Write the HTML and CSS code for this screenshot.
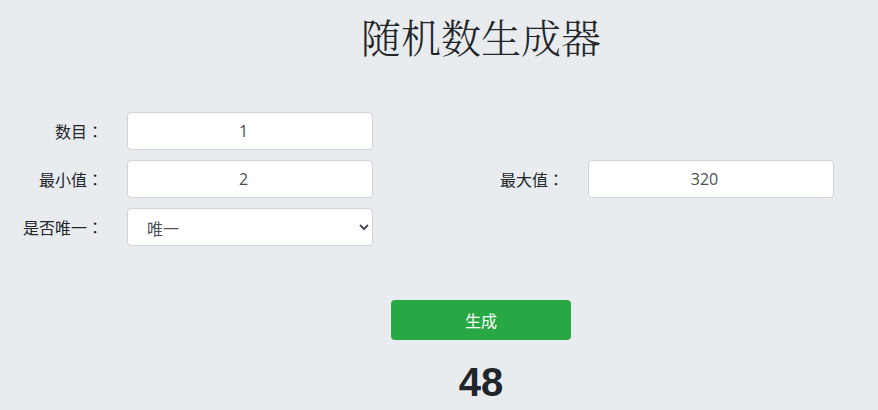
FILE: index.html
```html
<!DOCTYPE html>
<html lang="zh-CN">
<head>
<meta charset="utf-8">
<title>随机数生成器</title>
<link rel="stylesheet" href="styles.css">
</head>
<body>
<div class="page">
  <h1 class="title">随机数生成器</h1>
  <form class="form">
    <div class="row">
      <div class="pair">
        <label class="label">数目<span class="colon" lang="zh-TW">：</span></label>
        <input class="control" type="text" value="1">
      </div>
    </div>
    <div class="row">
      <div class="pair">
        <label class="label">最小值<span class="colon" lang="zh-TW">：</span></label>
        <input class="control" type="text" value="2">
      </div>
      <div class="pair">
        <label class="label">最大值<span class="colon" lang="zh-TW">：</span></label>
        <input class="control" type="text" value="320">
      </div>
    </div>
    <div class="row">
      <div class="pair">
        <label class="label">是否唯一<span class="colon" lang="zh-TW">：</span></label>
        <select class="control select">
          <option>唯一</option>
          <option>不唯一</option>
        </select>
      </div>
    </div>
  </form>
  <div class="actions">
    <button type="button" class="btn">生成</button>
    <div class="result">48</div>
  </div>
</div>
</body>
</html>
```
FILE: styles.css
```css
html, body {
  margin: 0;
  padding: 0;
}
body {
  background: #e9ecef;
  color: #212529;
  font-family: "Noto Sans CJK SC", "Open Sans", sans-serif;
  font-size: 16px;
  width: 878px;
  height: 410px;
  overflow: hidden;
}
.page {
  display: flex;
  flex-direction: column;
}
.title {
  margin: 10px 0 0 84px;
  text-align: center;
  font-family: "Noto Serif CJK SC", "Liberation Serif", "Noto Sans CJK SC", serif;
  font-weight: 300;
  font-size: 40px;
  line-height: 52px;
  color: #212529;
}
.form {
  margin-top: 50px;
  display: flex;
  flex-direction: column;
  gap: 10px;
}
.row {
  display: flex;
  gap: 88px;
}
.pair {
  display: flex;
  align-items: center;
  gap: 24px;
}
.label {
  width: 103px;
  text-align: right;
  font-size: 16px;
  color: #212529;
  white-space: nowrap;
}
.colon {
  font-family: "Noto Sans CJK TC", "Noto Sans CJK SC", sans-serif;
}
.control {
  box-sizing: border-box;
  width: 246px;
  height: 38px;
  border: 1px solid #ced4da;
  border-radius: 4px;
  background: #fff;
  color: #495057;
  font-family: "Open Sans", "Noto Sans CJK SC", sans-serif;
  font-size: 16px;
  text-align: center;
  padding: 6px 25px 6px 12px;
  outline: none;
}
.select {
  text-align: left;
  padding: 6px 8px 6px 15px;
  font-family: "Noto Sans CJK SC", sans-serif;
}
.actions {
  margin: 54px 0 0 84px;
  display: flex;
  flex-direction: column;
  align-items: center;
}
.btn {
  width: 180px;
  height: 40px;
  border: none;
  border-radius: 4px;
  background: #28a745;
  color: #fff;
  font-family: "Noto Sans CJK SC", sans-serif;
  font-size: 16px;
  cursor: pointer;
}
.result {
  margin-top: 18px;
  font-family: "Liberation Sans", Arial, sans-serif;
  font-weight: bold;
  font-size: 40px;
  line-height: 48px;
  color: #212529;
}
```
